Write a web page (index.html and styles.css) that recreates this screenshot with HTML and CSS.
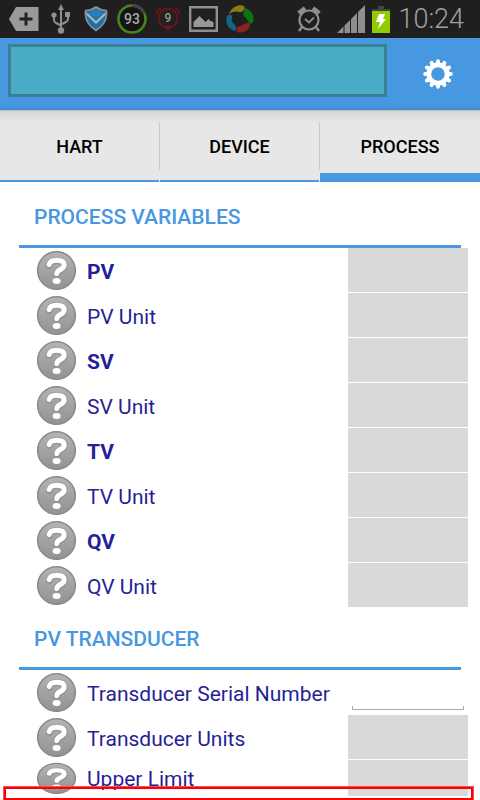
FILE: index.html
```html
<!DOCTYPE html>
<html lang="en">
<head>
<meta charset="utf-8">
<meta name="viewport" content="width=device-width, initial-scale=1">
<title>Process</title>
<link rel="stylesheet" href="styles.css">
</head>
<body>
<svg class="defs" aria-hidden="true">
  <defs>
    <linearGradient id="disc" x1="0" y1="0" x2="0" y2="1">
      <stop offset="0" stop-color="#b4b4b4"/>
      <stop offset="1" stop-color="#929292"/>
    </linearGradient>
  </defs>
  <symbol id="help" viewBox="0 0 40 40" preserveAspectRatio="none">
    <circle cx="20.500" cy="20.500" r="18.800" fill="url(#disc)" stroke="#8a8a8a" stroke-width="1.600"/>
    <path d="M13.200 15.500C14 11.500 17 10.500 20.500 10.500c4.500 0 7.700 1.600 7.700 5 0 5-7.200 4.200-7.400 8.600" fill="none" stroke="#808080" stroke-opacity=".45" stroke-width="7" stroke-linecap="round"/>
    <path d="M13.200 14.500C14 11.200 17 10.300 20.500 10.300c4.500 0 7.700 1.500 7.700 4.700 0 4.800-7.200 4.200-7.400 8.600" fill="none" stroke="#fff" stroke-width="5" stroke-linecap="round"/>
    <ellipse cx="20.600" cy="31" rx="4" ry="3" fill="#fff"/>
  </symbol>
</svg>

<div class="status">
  <svg class="s-tag" width="30" height="24" viewBox="0 0 30 24"><path d="M7 0h22.500v24H7L0 12z" fill="#9a9a9a"/><path d="M17 5.500v13M10.500 12h13" stroke="#222" stroke-width="3"/></svg>
  <svg class="s-usb" width="20" height="30" viewBox="0 0 20 30"><g fill="none" stroke="#8f8f8f" stroke-width="2"><path d="M10 5v20M3 12v4q0 2 2 3l5 2.500M17 11v4q0 2-2 3l-5 2.500"/></g><path d="M10 0l3 6H7zM14 8h5v5h-5z" fill="#8f8f8f"/><circle cx="3" cy="11" r="2.600" fill="#8f8f8f"/><circle cx="10" cy="26.500" r="3.200" fill="#8f8f8f"/></svg>
  <svg class="s-shield" width="24" height="26" viewBox="0 0 24 26"><path d="M12 1Q16 4 22.500 4.500 24 17 12 24.500 0 17 1.500 4.500 8 4 12 1z" fill="#1f70a8" stroke="#8d9193" stroke-width="1.600"/><path d="M2.500 6l9.500 9 9.500-9v3L12 18 2.500 9z" fill="#a9b4ba"/><path d="M5 7l7-4 7 4-7 6z" fill="#2480bd"/></svg>
  <svg class="s-ring" width="30" height="30" viewBox="0 0 30 30"><circle cx="15" cy="15" r="13.500" fill="#151515" stroke="#47831e" stroke-width="2.600"/><path d="M15 1.500A13.500 13.500 0 0 1 27.500 10" fill="none" stroke="#444" stroke-width="3"/><text x="15" y="20" text-anchor="middle" class="ring-num">93</text></svg>
  <svg class="s-alarm" width="26" height="26" viewBox="0 0 26 26"><g fill="none" stroke="#741418" stroke-width="1.500"><circle cx="13" cy="12" r="9.500" fill="#252020"/><path d="M1 8q1-4 5-6M25 8q-1-4-5-6"/></g><path d="M9 20h8l-4 5z" fill="#741418"/><text x="13" y="16" text-anchor="middle" class="alarm-num">9</text></svg>
  <svg class="s-pic" width="29" height="26" viewBox="0 0 29 26"><path d="M1.200 1.200h26.600v23.600H1.200z" fill="none" stroke="#8f8f8f" stroke-width="2.400"/><path d="M4.500 21v-5l6-6 6 6 3-3 2 2 3 1v5z" fill="#999"/></svg>
  <svg class="s-wheel" width="28" height="28" viewBox="0 0 28 28"><path d="M3 9C6 1 14-1 18 1c2 3-1 6-4 6C10 6 7 6 3 9z" fill="#8c7b13"/><path d="M19 3c7 2 10 9 8 14-2 3-4 1-5-1-1-3-4-4-5-7 0-2 2-3 2-6z" fill="#0c760e"/><path d="M24 18c1 7-7 11-13 9-2-3 0-6 3-6 4-1 6-4 10-3z" fill="#852224"/><path d="M9 26C1 24-1 16 1 11c3-3 6-1 5 2-1 3 1 5 3 7s1 4 0 6z" fill="#146489"/></svg>
  <svg class="s-clock" width="24" height="26" viewBox="0 0 24 26"><g fill="none" stroke="#8f8f8f"><circle cx="12" cy="14" r="9.500" stroke-width="2.200"/><path d="M8 13l4 3.500 5-5" stroke-width="1.800"/><path d="M1.500 7L8 2M22.500 7L16 2" stroke-width="4"/><path d="M5 21l-3 4M19 21l3 4" stroke-width="2.500"/></g></svg>
  <svg class="s-signal" width="28" height="28" viewBox="0 0 28 28"><path d="M0 28L6.500 21.500V28zM7.500 20.500L13 15V28H7.500zM14 14l6-6V28h-6zM21 7l7-7V28h-7z" fill="#8f8f8f"/></svg>
  <svg class="s-batt" width="18" height="27" viewBox="0 0 18 27"><path d="M6 0h6v3h6v2H0V3h6z" fill="#444"/><path d="M0 5h18v22H0z" fill="#90cc00"/><path d="M7 8h6l-2 5h3L6 23l2-7H4z" fill="#fff"/></svg>
  <time class="time">10:24</time>
</div>

<header class="bar">
  <input class="title-field" type="text" aria-label="Device name">
  <button class="gear" type="button" aria-label="Settings">
    <svg width="30" height="30" viewBox="-15 -15 30 30"><circle r="9.200" fill="none" stroke="#fff" stroke-width="4.800"/><g stroke="#fff" stroke-width="4" stroke-linecap="round"><path id="t" d="M0-11v-1.800"/><use href="#t" transform="rotate(30)"/><use href="#t" transform="rotate(60)"/><use href="#t" transform="rotate(90)"/><use href="#t" transform="rotate(120)"/><use href="#t" transform="rotate(150)"/><use href="#t" transform="rotate(180)"/><use href="#t" transform="rotate(210)"/><use href="#t" transform="rotate(240)"/><use href="#t" transform="rotate(270)"/><use href="#t" transform="rotate(300)"/><use href="#t" transform="rotate(330)"/></g></svg>
  </button>
</header>

<nav class="tabs">
  <button class="tab" type="button">HART</button>
  <button class="tab" type="button">DEVICE</button>
  <button class="tab active" type="button">PROCESS</button>
</nav>

<main>
  <section>
    <h2>PROCESS VARIABLES</h2>
    <div class="row strong"><button class="help" type="button" aria-label="Help"><svg><use href="#help"/></svg></button><label for="pv">PV</label><input id="pv" class="value" readonly></div>
    <div class="row"><button class="help" type="button" aria-label="Help"><svg><use href="#help"/></svg></button><label for="pvu">PV Unit</label><input id="pvu" class="value" readonly></div>
    <div class="row strong"><button class="help" type="button" aria-label="Help"><svg><use href="#help"/></svg></button><label for="sv">SV</label><input id="sv" class="value" readonly></div>
    <div class="row"><button class="help" type="button" aria-label="Help"><svg><use href="#help"/></svg></button><label for="svu">SV Unit</label><input id="svu" class="value" readonly></div>
    <div class="row strong"><button class="help" type="button" aria-label="Help"><svg><use href="#help"/></svg></button><label for="tv">TV</label><input id="tv" class="value" readonly></div>
    <div class="row"><button class="help" type="button" aria-label="Help"><svg><use href="#help"/></svg></button><label for="tvu">TV Unit</label><input id="tvu" class="value" readonly></div>
    <div class="row strong"><button class="help" type="button" aria-label="Help"><svg><use href="#help"/></svg></button><label for="qv">QV</label><input id="qv" class="value" readonly></div>
    <div class="row"><button class="help" type="button" aria-label="Help"><svg><use href="#help"/></svg></button><label for="qvu">QV Unit</label><input id="qvu" class="value" readonly></div>
  </section>
  <section>
    <h2>PV TRANSDUCER</h2>
    <div class="row"><button class="help" type="button" aria-label="Help"><svg><use href="#help"/></svg></button><label for="tsn">Transducer Serial Number</label><input id="tsn" class="edit"></div>
    <div class="row"><button class="help" type="button" aria-label="Help"><svg><use href="#help"/></svg></button><label for="tu">Transducer Units</label><input id="tu" class="value" readonly></div>
    <div class="row short"><button class="help" type="button" aria-label="Help"><svg><use href="#help"/></svg></button><label for="ul">Upper Limit</label><input id="ul" class="value" readonly></div>
  </section>
  <div class="marker"></div>
</main>
</body>
</html>
```
FILE: styles.css
```css
* { box-sizing: border-box; }
body {
  margin: 0;
  background: #fff;
  font-family: Roboto, "Liberation Sans", sans-serif;
  color: #261f96;
}
button, input {
  margin: 0;
  padding: 0;
  border: 0;
  border-radius: 0;
  background: none;
  font: inherit;
  color: inherit;
}
svg { display: block; }
.defs { position: absolute; width: 0; height: 0; }

.status {
  display: flex;
  align-items: center;
  height: 38px;
  padding: 0 16px 0 9px;
  background: #1f1f1f;
}
.status svg { flex: none; }
.s-usb { margin-left: 12px; }
.s-shield { margin-left: 13px; }
.s-ring { margin-left: 9px; }
.s-alarm { margin-left: 8px; }
.s-pic { margin-left: 8px; }
.s-wheel { margin-left: 8px; }
.s-clock { margin-left: auto; }
.s-signal { margin-left: 16px; }
.s-batt { margin-left: 7px; }
.ring-num { font-size: 14px; font-weight: 500; fill: #aaa; }
.alarm-num { font-size: 12px; font-weight: 500; fill: #999; }
.time {
  margin-left: 8px;
  font-size: 27px;
  font-weight: 300;
  line-height: 38px;
  color: #a0a0a0;
}

.bar {
  display: flex;
  align-items: center;
  height: 72px;
  padding: 6px 27px 13px 8px;
  background: linear-gradient(#4797e1 66px, #438ed6);
}
.title-field {
  flex: 1;
  min-width: 0;
  height: 53px;
  border: 3px solid #388194;
  background: #4bacc6;
}
.gear {
  margin-left: 36px;
  padding-top: 6px;
}

.tabs {
  display: grid;
  grid-template-columns: repeat(3, 1fr);
  height: 72px;
  background: linear-gradient(#a5a5a5 0, #d6d6d6 1px, #e7e7e7 12px);
}
.tab {
  position: relative;
  padding-top: 2px;
  border-bottom: 2px solid #4797e1;
  font-size: 18px;
  font-weight: 500;
  color: #000;
}
.tab:not(.active) {
  margin-right: 1px;
}
.tab:not(.active)::after {
  content: "";
  position: absolute;
  top: 12px;
  right: -1px;
  width: 1px;
  height: 48px;
  background: #cbcbcb;
}
.tab.active {
  padding-top: 9px;
  border-bottom-width: 9px;
}

main {
  position: relative;
  padding-bottom: 4px;
}
h2 {
  margin: 0 19px;
  padding: 5px 15px 0;
  height: 66px;
  border-bottom: 3px solid #4797e1;
  font-size: 21px;
  font-weight: 500;
  line-height: 60px;
  color: #4797e1;
}
section + section h2 {
  height: 62px;
  padding-top: 1px;
}
.row {
  display: grid;
  grid-template-columns: 40px minmax(0, 1fr) 120px;
  column-gap: 11px;
  align-items: center;
  height: 45px;
  padding: 0 12px 1px 36px;
  font-size: 21px;
  line-height: 28px;
  white-space: nowrap;
}
.row label { padding-top: 3px; }
.strong { font-weight: 700; }
.help, .help svg {
  width: 40px;
  height: 40px;
}
.value {
  width: 120px;
  height: 100%;
  background: #d9d9d9;
}
.edit {
  width: 112px;
  height: 4px;
  margin: 0 4px 4px;
  align-self: end;
  border: 1px solid #aaa;
  border-top: 0;
}
.short {
  height: 36px;
  padding-bottom: 0;
}
.short .help, .short .help svg { height: 32px; }
.short label { padding-top: 1px; }
.marker {
  position: absolute;
  left: 4px;
  right: 7px;
  bottom: 0;
  height: 13px;
  border: 2px solid #f00;
  box-shadow: 0 0 0 1px #ff5050;
}
```
